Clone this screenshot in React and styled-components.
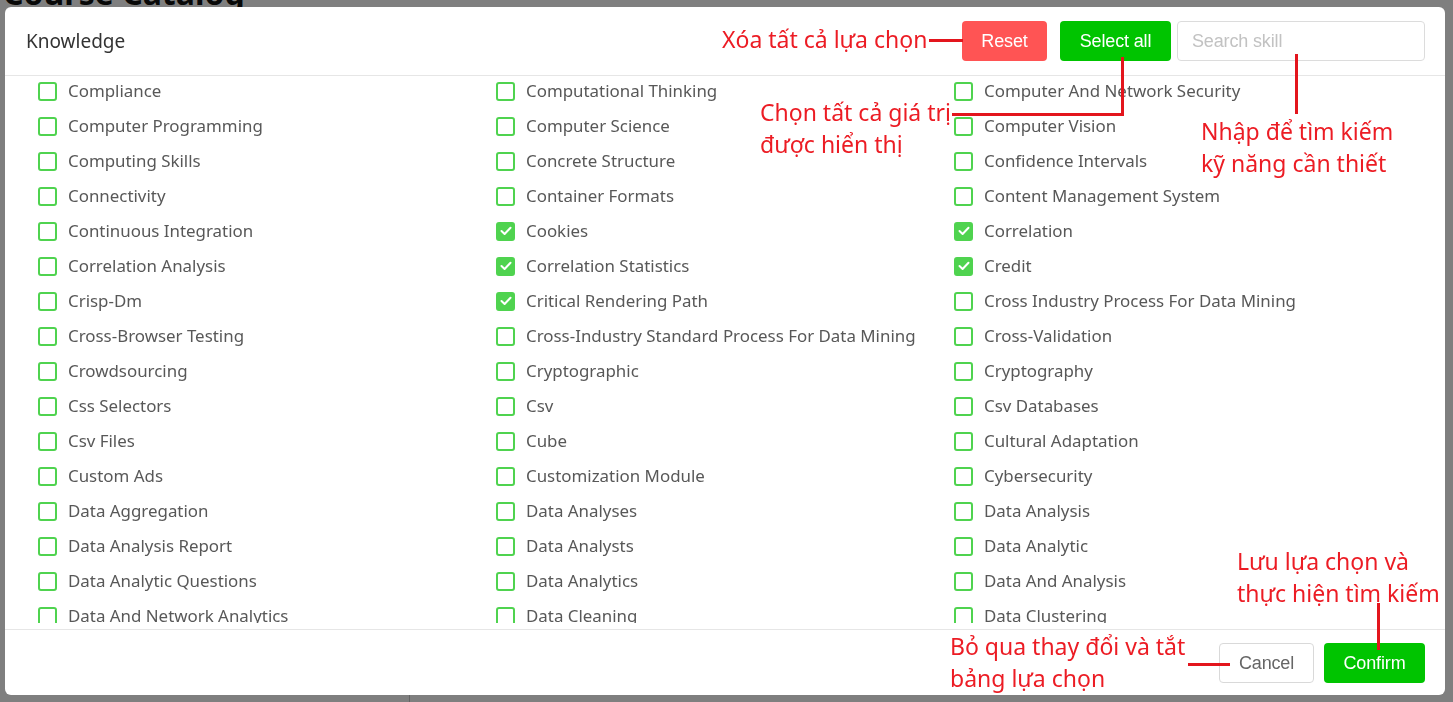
import React from "react";
import styled, { createGlobalStyle } from "styled-components";

const Global = createGlobalStyle`
  html, body { margin: 0; padding: 0; background: #fff; overflow: hidden; }
  body { width: 1453px; height: 702px; font-family: "Noto Sans", sans-serif; }
  * { box-sizing: border-box; }
`;

const Page = styled.div`
  position: relative;
  width: 1453px;
  height: 702px;
  overflow: hidden;
`;

const PageTitle = styled.h1`
  margin: -23px 0 0 3px;
  font: 700 32px/32px "Noto Sans", sans-serif;
  color: #111;
`;

const PageBody = styled.div`
  display: flex;
  height: 700px;
`;

const Sidebar = styled.div`
  width: 410px;
  flex: none;
  border-right: 1px solid #c8c8c8;
`;

const Overlay = styled.div`
  position: fixed;
  inset: 0;
  background: rgba(0, 0, 0, 0.5);
`;

const Modal = styled.div`
  position: absolute;
  top: 7px;
  left: 5px;
  width: 1440px;
  height: 688px;
  background: #fff;
  border-radius: 6px;
  display: flex;
  flex-direction: column;
  overflow: hidden;
`;

const Header = styled.div`
  height: 69px;
  flex: none;
  display: flex;
  align-items: center;
  padding: 0 20px 0 21px;
  border-bottom: 1px solid #e6e6e6;
`;

const Title = styled.div`
  font: 400 19px/1 "Noto Sans", sans-serif;
  color: #333;
  flex: 1;
`;

const Btn = styled.button`
  height: 40px;
  width: ${(p) => p.$w}px;
  border-radius: 4px;
  font: 400 18px/1 "Liberation Sans", Arial, sans-serif;
  letter-spacing: -0.15px;
  cursor: pointer;
  border: 1px solid ${(p) => (p.$variant === "ghost" ? "#d9d9d9" : "transparent")};
  color: ${(p) => (p.$variant === "ghost" ? "#666" : "#fff")};
  background: ${(p) =>
    p.$variant === "danger" ? "#ff5454" : p.$variant === "primary" ? "#00c400" : "#fff"};
  margin-left: ${(p) => p.$ml || 0}px;
  padding: 0;
`;

const Search = styled.input`
  width: 248px;
  height: 40px;
  margin-left: 6px;
  border: 1px solid #dcdcdc;
  border-radius: 4px;
  padding: 0 14px;
  font: 400 18px/1 "Liberation Sans", Arial, sans-serif;
  letter-spacing: -0.15px;
  color: #333;
  outline: none;
  &::placeholder { color: #c2c2c2; }
`;

const Body = styled.div`
  flex: 1;
  min-height: 0;
  padding: 0 0 6px 33px;
  display: flex;
`;

const Scroll = styled.div`
  flex: 1;
  overflow: hidden;
`;

const Grid = styled.div`
  display: grid;
  grid-template-columns: repeat(3, 458px);
  grid-auto-rows: 35px;
`;

const Item = styled.label`
  display: flex;
  align-items: center;
  padding-bottom: 5px;
  white-space: nowrap;
  font: 400 16.9px/1 "Noto Sans", sans-serif;
  color: #585858;
`;

const Box = styled.span`
  width: 19px;
  height: 19px;
  flex: none;
  border: 2px solid #4fd34f;
  border-radius: 3px;
  margin-right: 11px;
  display: flex;
  align-items: center;
  justify-content: center;
  background: ${(p) => (p.$checked ? "#4fd34f" : "#fff")};
`;

const Footer = styled.div`
  height: 66px;
  flex: none;
  border-top: 1px solid #e6e6e6;
  display: flex;
  align-items: center;
  justify-content: flex-end;
  padding: 0 20px 0 0;
`;

const AnnLayer = styled.div`
  position: absolute;
  inset: 0;
  pointer-events: none;
`;

const AnnText = styled.div`
  position: absolute;
  left: ${(p) => p.$x}px;
  top: ${(p) => p.$y}px;
  font: 400 23px/32px "Noto Sans", sans-serif;
  color: #ec1c24;
  white-space: nowrap;
`;

const AnnLine = styled.div`
  position: absolute;
  left: ${(p) => p.$x}px;
  top: ${(p) => p.$y}px;
  width: ${(p) => p.$w}px;
  height: ${(p) => p.$h}px;
  background: #e3151d;
`;

const items = [
  ["Compliance", "Computational Thinking", "Computer And Network Security"],
  ["Computer Programming", "Computer Science", "Computer Vision"],
  ["Computing Skills", "Concrete Structure", "Confidence Intervals"],
  ["Connectivity", "Container Formats", "Content Management System"],
  ["Continuous Integration", "Cookies*", "Correlation*"],
  ["Correlation Analysis", "Correlation Statistics*", "Credit*"],
  ["Crisp-Dm", "Critical Rendering Path*", "Cross Industry Process For Data Mining"],
  ["Cross-Browser Testing", "Cross-Industry Standard Process For Data Mining", "Cross-Validation"],
  ["Crowdsourcing", "Cryptographic", "Cryptography"],
  ["Css Selectors", "Csv", "Csv Databases"],
  ["Csv Files", "Cube", "Cultural Adaptation"],
  ["Custom Ads", "Customization Module", "Cybersecurity"],
  ["Data Aggregation", "Data Analyses", "Data Analysis"],
  ["Data Analysis Report", "Data Analysts", "Data Analytic"],
  ["Data Analytic Questions", "Data Analytics", "Data And Analysis"],
  ["Data And Network Analytics", "Data Cleaning", "Data Clustering"],
  ["Data Collection", "Data Compression", "Data Consistency"],
].flat();

const Check = () => (
  <svg width="12" height="10" viewBox="0 0 12 10">
    <polyline points="1.5,5 4.6,8 10.5,1.8" fill="none" stroke="#fff" strokeWidth="2" strokeLinecap="round" strokeLinejoin="round" />
  </svg>
);

export default function App() {
  return (
    <>
      <Global />
      <Page>
        <PageTitle>Course Catalog</PageTitle>
        <PageBody>
          <Sidebar />
        </PageBody>
        <Overlay>
          <Modal>
            <Header>
              <Title>Knowledge</Title>
              <Btn $variant="danger" $w={85}>Reset</Btn>
              <Btn $variant="primary" $w={111} $ml={13}>Select all</Btn>
              <Search placeholder="Search skill" />
            </Header>
            <Body>
              <Scroll>
                <Grid>
                  {items.map((raw) => {
                    const checked = raw.endsWith("*");
                    const name = checked ? raw.slice(0, -1) : raw;
                    return (
                      <Item key={name}>
                        <Box $checked={checked}>{checked && <Check />}</Box>
                        {name}
                      </Item>
                    );
                  })}
                </Grid>
              </Scroll>
            </Body>
            <Footer>
              <Btn $variant="ghost" $w={95}>Cancel</Btn>
              <Btn $variant="primary" $w={101} $ml={10}>Confirm</Btn>
            </Footer>
          </Modal>
          <AnnLayer>
            <AnnText $x={722} $y={23}>Xóa tất cả lựa chọn</AnnText>
            <AnnLine $x={929} $y={39} $w={34} $h={3} />

            <AnnText $x={760} $y={96}>Chọn tất cả giá trị<br />được hiển thị</AnnText>
            <AnnLine $x={952} $y={113} $w={172} $h={3} />
            <AnnLine $x={1121} $y={57} $w={3} $h={59} />

            <AnnLine $x={1295} $y={54} $w={3} $h={60} />
            <AnnText $x={1201} $y={115}>Nhập để tìm kiếm<br />kỹ năng cần thiết</AnnText>

            <AnnText $x={1237} $y={545}>Lưu lựa chọn và<br />thực hiện tìm kiếm</AnnText>
            <AnnLine $x={1377} $y={603} $w={3} $h={47} />

            <AnnText $x={950} $y={630}>Bỏ qua thay đổi và tắt<br />bảng lựa chọn</AnnText>
            <AnnLine $x={1188} $y={663} $w={42} $h={3} />
          </AnnLayer>
        </Overlay>
      </Page>
    </>
  );
}
